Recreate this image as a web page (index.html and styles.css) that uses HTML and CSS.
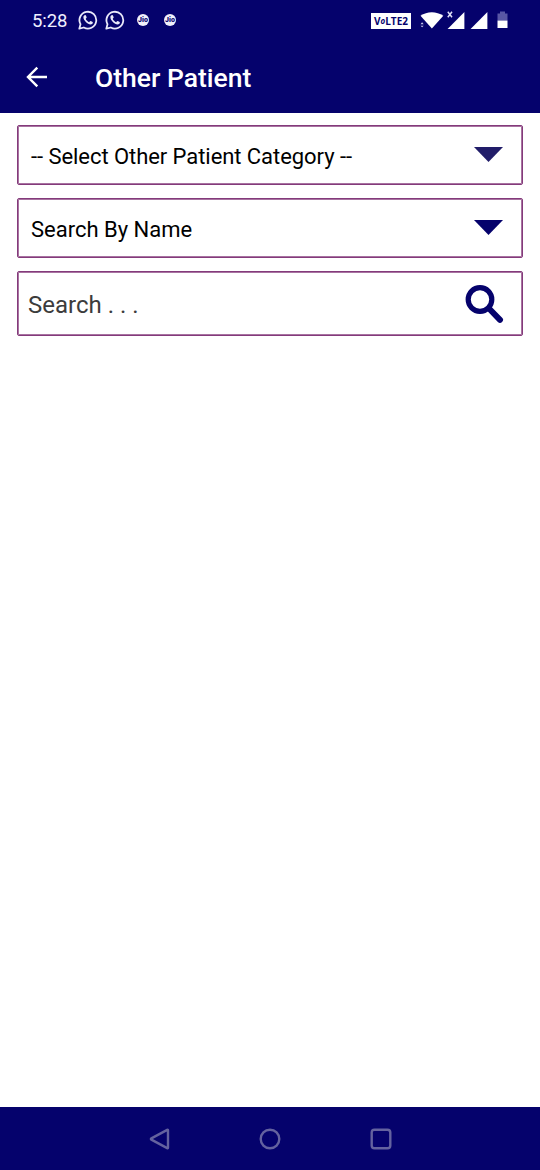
FILE: index.html
```
<!DOCTYPE html>
<html lang="en">

<head>
  <meta charset="UTF-8">
  <title>Other Patient</title>
  <link rel="stylesheet" href="styles.css">
</head>

<body>
<div class="page">
  <div class="header">
    <div class="status">
      <span class="time">5:28</span>
      <svg class="chat" width="20" height="20" viewBox="0 0 20 20">
        <path d="M1.3 18.7l1.2-4.5A8.4 8.4 0 1 1 5.8 17.5z" fill="none" stroke="#e9e9fa" stroke-width="1.8" stroke-linejoin="round"/>
        <path d="M7.2 5.1c-.9 0-1.8 1-1.8 2.2 0 3 4.2 7.2 7.2 7.2 1.2 0 2.3-.9 2.3-2 0-.4-2.1-1.5-2.5-1.4-.5.1-.9 1.2-1.3 1.1-1-.3-3-2.2-3.3-3.2-.1-.4.8-.9.9-1.4 0-.5-.8-2.5-1.5-2.5z" fill="#e9e9fa"/>
      </svg>
      <svg class="chat second" width="20" height="20" viewBox="0 0 20 20">
        <path d="M1.3 18.7l1.2-4.5A8.4 8.4 0 1 1 5.8 17.5z" fill="none" stroke="#e9e9fa" stroke-width="1.8" stroke-linejoin="round"/>
        <path d="M7.2 5.1c-.9 0-1.8 1-1.8 2.2 0 3 4.2 7.2 7.2 7.2 1.2 0 2.3-.9 2.3-2 0-.4-2.1-1.5-2.5-1.4-.5.1-.9 1.2-1.3 1.1-1-.3-3-2.2-3.3-3.2-.1-.4.8-.9.9-1.4 0-.5-.8-2.5-1.5-2.5z" fill="#e9e9fa"/>
      </svg>
      <span class="jio">Jio</span>
      <span class="jio last">Jio</span>
      <span class="volte">V<i>o</i>LTE2</span>
      <svg class="wifi" width="25" height="20" viewBox="0 0 25 20">
        <path d="M.5 5.8C7 1 16.500 1 23.300 5.800L11.900 18.500z" fill="#fff"/>
        <path d="M.5 14.200l1.600-2 1.600 2zM.5 15.700h3.200l-1.600 1.600z" fill="#c9c9ea"/>
      </svg>
      <svg class="signal" width="18" height="20" viewBox="0 0 18 20">
        <path d="M17.400 2v17H.6z" fill="#fff"/>
        <path d="M.8 1.800l4.200 5.400M5 1.800L.8 7.200" stroke="#e0e0f5" stroke-width="1.500"/>
      </svg>
      <svg class="signal two" width="18" height="20" viewBox="0 0 18 20">
        <path d="M17.400 2v17H.6z" fill="#fff"/>
      </svg>
      <svg class="battery" width="11" height="18" viewBox="0 0 11 18">
        <path d="M.5 2.500h2.500V.5h5v2h2.500V9.500H.5z" fill="#5957a5"/>
        <path d="M.5 9.500h10v7.500H.5z" fill="#fff"/>
      </svg>
    </div>
    <div class="title-bar">
      <svg class="back" width="22" height="22" viewBox="0 0 22 22">
        <path d="M21 11H2.500M11.300 1.700L2 11l9.300 9.300" fill="none" stroke="#fff" stroke-width="2.400"/>
      </svg>
      <h1>Other Patient</h1>
    </div>
  </div>
  <div class="form">
    <div class="field">
      <span class="category">-- Select Other Patient Category --</span>
      <svg class="arrow dim" width="30" height="15" viewBox="0 0 30 15"><path d="M0 0h29L14.500 15z"/></svg>
    </div>
    <div class="field">
      <span>Search By Name</span>
      <svg class="arrow" width="30" height="15" viewBox="0 0 30 15"><path d="M0 0h29L14.500 15z"/></svg>
    </div>
    <div class="field search">
      <span>Search . . .</span>
      <svg class="glass" width="40" height="40" viewBox="0 0 40 40">
        <circle cx="16" cy="15.500" r="11.800"/>
        <path class="handle" d="M25 24.500L36 35.800"/>
      </svg>
    </div>
  </div>
  <div class="nav">
    <svg class="nav-back" width="22" height="22" viewBox="0 0 22 22"><path d="M19 2.300v17.400q0 .8-.8.400L2.400 11.600q-1-.6 0-1.200L18.200 1.900q.8-.4.8.4z"/></svg>
    <svg width="22" height="22" viewBox="0 0 22 22"><circle cx="11" cy="11" r="9.300"/></svg>
    <svg width="22" height="22" viewBox="0 0 22 22"><rect x="1.700" y="1.700" width="18.600" height="18.600" rx="2.800"/></svg>
  </div>
</div>
</body>

</html>
```
FILE: styles.css
```
* {
  padding: 0;
  margin: 0;
  box-sizing: border-box;
}

body {
  font-family: Roboto, sans-serif;
  background: #fff;
}

svg {
  display: block;
  flex-shrink: 0;
}

.page {
  display: flex;
  flex-direction: column;
  height: 1170px;
}

.header {
  height: 113px;
  background: #05026c;
  color: #fff;
}

.status {
  display: flex;
  align-items: center;
  height: 40px;
  padding: 0 32px;
}

.time {
  width: 46px;
  padding-top: 2px;
  font-size: 18.5px;
  letter-spacing: -0.1px;
  color: #f0f0ff;
}

.second {
  margin-left: 7px;
}

.jio {
  width: 12px;
  height: 12px;
  margin-left: 12px;
  border-radius: 50%;
  background: #f0f0fb;
  color: #05026c;
  font-size: 7px;
  font-weight: 900;
  line-height: 12px;
  text-align: center;
}

.last {
  margin-left: 15px;
}

.volte {
  width: 40px;
  height: 16px;
  margin-top: 1px;
  margin-left: auto;
  background: #fff;
  color: #05026c;
  font-family: "Open Sans", sans-serif;
  font-size: 10px;
  font-weight: 700;
  line-height: 16px;
  text-align: center;
}

.volte i {
  font-size: 8px;
  line-height: 8px;
  vertical-align: 1px;
}

.wifi {
  margin-left: 9px;
}

.signal {
  margin-left: 2px;
}

.two {
  margin-left: 5px;
}

.battery {
  margin-left: 9px;
}

.title-bar {
  display: flex;
  align-items: center;
  height: 73px;
  padding-left: 26px;
}

.title-bar h1 {
  margin-left: 47px;
  padding-top: 2px;
  font-size: 26.5px;
  font-weight: 500;
  line-height: 32px;
}

.form {
  flex: 1;
  display: flex;
  flex-direction: column;
  gap: 13px;
  padding: 12px 17px;
}

.field {
  display: flex;
  align-items: center;
  justify-content: space-between;
  height: 60px;
  padding: 3px 18px 0 13px;
  border: 1px solid #843a7b;
  border-radius: 2px;
  box-shadow: inset 0 0 0 1px #a873a1;
  color: #000;
  font-size: 22px;
}

.category {
  letter-spacing: -0.06px;
}

.arrow {
  margin-bottom: 5px;
  fill: #05026c;
}

.dim {
  fill: #211d69;
}

.search {
  height: 65px;
  padding: 3px 18px 0 10px;
  color: #3c3c3c;
  font-size: 24px;
}

.glass {
  margin-bottom: 2px;
  fill: none;
  stroke: #05026c;
  stroke-width: 5.2;
  stroke-linecap: round;
}

.handle {
  stroke-width: 6;
}

.nav {
  display: flex;
  align-items: center;
  justify-content: center;
  gap: 89px;
  height: 63px;
  background: #05026c;
}

.nav svg {
  fill: none;
  stroke: #64629f;
  stroke-width: 2.4;
}

.nav .nav-back {
  margin-left: 1px;
  margin-right: -1px;
}
```
